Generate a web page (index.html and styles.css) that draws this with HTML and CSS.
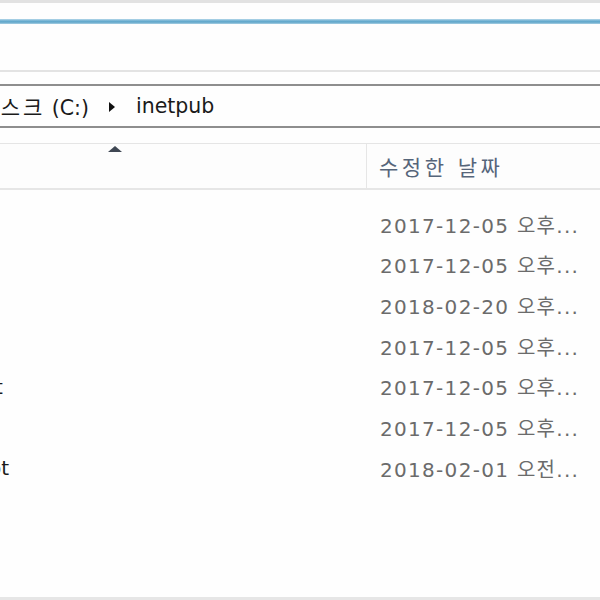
FILE: index.html
```html
<!DOCTYPE html>
<html lang="ko">
<head>
<meta charset="utf-8">
<link rel="stylesheet" href="styles.css">
</head>
<body>
<div class="window">
  <div class="topband"></div>
  <div class="ribbon-space"></div>
  <div class="blueline"></div>
  <div class="toolbar-space"></div>
  <div class="grayline"></div>
  <div class="gap1"></div>
  <div class="address">
    <span class="crumb crumb-first"><span class="ko">로컬 디스크</span> (C:)</span>
    <span class="chev"></span>
    <span class="crumb">inetpub</span>
  </div>
  <div class="gap2"></div>
  <div class="header">
    <div class="col-name"><span class="sort"></span></div>
    <div class="col-date">수정한 날짜</div>
  </div>
  <div class="rows">
    <div class="row"><span class="name">custerr</span><span class="date">2017-12-05 오후...</span></div>
    <div class="row"><span class="name">ftproot</span><span class="date">2017-12-05 오후...</span></div>
    <div class="row"><span class="name">history</span><span class="date">2018-02-20 오후...</span></div>
    <div class="row"><span class="name">logs</span><span class="date">2017-12-05 오후...</span></div>
    <div class="row"><span class="name">mailroot</span><span class="date">2017-12-05 오후...</span></div>
    <div class="row"><span class="name">temp</span><span class="date">2017-12-05 오후...</span></div>
    <div class="row"><span class="name">wwwroot</span><span class="date">2018-02-01 오전...</span></div>
  </div>
  <div class="bottomline"></div>
</div>
</body>
</html>
```
FILE: styles.css
```css
html, body {
  margin: 0;
  padding: 0;
  background: #fefefe;
}
.window {
  width: 600px;
  height: 600px;
  display: flex;
  flex-direction: column;
  overflow: hidden;
  font-family: "DejaVu Sans", "Noto Sans CJK KR", sans-serif;
  font-size: 20px;
}
.topband { height: 3px; background: #e2e2e2; flex: none; }
.ribbon-space { height: 16px; flex: none; }
.blueline {
  height: 5px;
  flex: none;
  background: linear-gradient(#b7d8ea, #6aaed0 40%, #5fa5c9 60%, #a7cfe3);
}
.toolbar-space { height: 46px; flex: none; }
.grayline { height: 2px; background: #e3e3e3; flex: none; }
.gap1 { height: 12px; flex: none; border-bottom: 2px solid #8e8e8e; }
.address {
  height: 42px;
  flex: none;
  display: flex;
  align-items: center;
  color: #1a1a1a;
  border-bottom: 2px solid #8e8e8e;
  white-space: nowrap;
  padding-bottom: 0;
  box-sizing: border-box;
  font-size: 20.5px;
}
.crumb-first { margin-left: -76px; }
.ko { letter-spacing: 3px; font-size: 21px; }
.chev {
  width: 0; height: 0;
  border-top: 5px solid transparent;
  border-bottom: 5px solid transparent;
  border-left: 6px solid #111;
  margin: 2px 21px 0 20px;
}
.gap2 { height: 15px; flex: none; border-bottom: 1px solid #e5e5e5; }
.header {
  height: 44px;
  flex: none;
  display: flex;
  border-bottom: 2px solid #e6e6e6;
  background: #fdfdfd;
}
.col-name {
  width: 366px;
  border-right: 1px solid #e6e6e6;
  position: relative;
}
.sort {
  position: absolute;
  left: 108px;
  top: 2px;
  width: 0; height: 0;
  border-left: 7px solid transparent;
  border-right: 7px solid transparent;
  border-bottom: 6px solid #3f4753;
}
.col-date {
  padding-left: 12px;
  display: flex;
  align-items: center;
  color: #56657a;
  font-size: 21px;
  letter-spacing: 3.5px;
}
.rows {
  padding-top: 14px;
  flex: 1;
}
.row {
  height: 40.67px;
  display: flex;
  align-items: center;
  white-space: nowrap;
}
.name {
  width: 460px;
  margin-left: -80px;
  flex: none;
  color: #1a1a1a;
}
.date {
  color: #6b6b6b;
  letter-spacing: 1.3px;
}
.bottomline { height: 3px; background: #e6e6e6; flex: none; }
```
